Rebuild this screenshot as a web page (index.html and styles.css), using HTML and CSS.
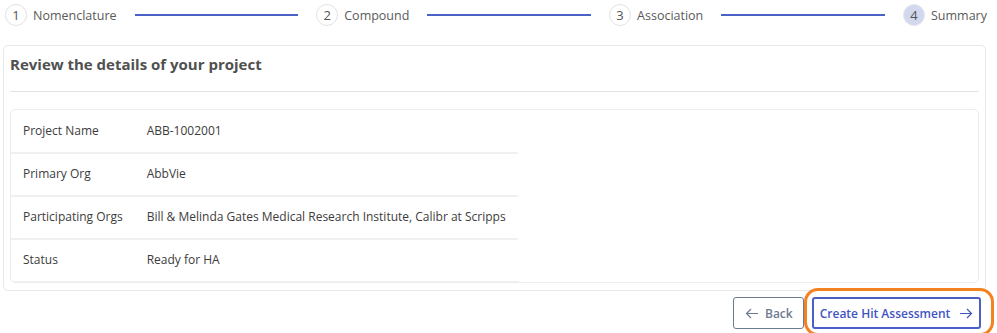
FILE: index.html
```html
<!DOCTYPE html>
<html>
<head>
<meta charset="utf-8">
<link rel="stylesheet" href="styles.css">
</head>
<body>
<div class="page">
  <div class="stepper">
    <div class="step"><span class="num">1</span><span class="label">Nomenclature</span></div>
    <div class="line"></div>
    <div class="step"><span class="num">2</span><span class="label">Compound</span></div>
    <div class="line"></div>
    <div class="step"><span class="num">3</span><span class="label">Association</span></div>
    <div class="line"></div>
    <div class="step active"><span class="num">4</span><span class="label">Summary</span></div>
  </div>

  <div class="card">
    <div class="card-header"><h2 class="title">Review the details of your project</h2></div>
    <div class="inner">
      <table class="details">
        <tr><td class="key">Project Name</td><td class="val">ABB-1002001</td></tr>
        <tr><td class="key">Primary Org</td><td class="val">AbbVie</td></tr>
        <tr><td class="key">Participating Orgs</td><td class="val">Bill &amp; Melinda Gates Medical Research Institute, Calibr at Scripps</td></tr>
        <tr><td class="key">Status</td><td class="val">Ready for HA</td></tr>
      </table>
    </div>
  </div>

  <div class="actions">
    <button class="btn btn-back"><svg class="arrow" width="14" height="11" viewBox="0 0 14 11"><path d="M13 5.5H1.5M6 1L1.5 5.5L6 10" fill="none" stroke="currentColor" stroke-width="1.2"/></svg>Back</button>
    <div class="highlight-wrap">
      <button class="btn btn-primary">Create Hit Assessment<svg class="arrow" width="14" height="11" viewBox="0 0 14 11"><path d="M1 5.5H12.5M8 1L12.5 5.5L8 10" fill="none" stroke="currentColor" stroke-width="1.2"/></svg></button>
      <span class="highlight"></span>
    </div>
  </div>
</div>
</body>
</html>
```
FILE: styles.css
```css
* { box-sizing: border-box; }
html, body { margin: 0; padding: 0; background: #fff; }
body {
  font-family: "Open Sans", "Liberation Sans", sans-serif;
  font-size: 12px;
  color: #3a3a3a;
}
.page { padding: 4px 11px 0 3px; width: 997px; height: 333px; overflow: hidden; }

.stepper {
  display: flex;
  align-items: center;
  height: 22px;
  padding-left: 2px;
  margin-right: -1px;
}
.step { display: flex; align-items: center; gap: 6px; }
.num {
  width: 22px; height: 22px;
  border-radius: 50%;
  border: 1.5px solid #e2e2e2;
  display: flex; align-items: center; justify-content: center;
  font-size: 13px;
  color: #555;
}
.step.active .num { background: #d2d9ef; border-color: #e4e6ee; }
.label { color: #5a5a5a; font-size: 12.5px; }
.line { flex: 1; height: 2px; background: #4a62c6; margin: 0 18px 0 18px; }

.card {
  margin-top: 19px;
  border: 1px solid #e8e8e8;
  border-radius: 5px;
  padding: 0 6px 7px;
  width: 983px;
}
.card-header {
  height: 46px;
  padding-top: 8px;
  border-bottom: 1px solid #e3e3e3;
}
.title {
  margin: 0;
  font-size: 15px;
  line-height: 20px;
  font-weight: 700;
  color: #505050;
}
.inner {
  margin-top: 17px;
  border: 1px solid #ececec;
  border-radius: 5px;
  height: 174px;
  overflow: hidden;
}
.details { border-collapse: collapse; }
.details td {
  height: 43px;
  padding: 0 12px 2px;
  border-bottom: 2px solid #f0f0f0;
  white-space: nowrap;
  color: #3c3c3c;
  vertical-align: middle;
}

.actions {
  display: flex;
  justify-content: flex-end;
  gap: 8px;
  margin-top: 6px;
  padding-right: 5px;
}
.btn {
  height: 32px;
  font-family: "Open Sans", "Liberation Sans", sans-serif;
  font-size: 12px;
  font-weight: 600;
  background: #fff;
  border-radius: 3px;
  display: flex;
  align-items: center;
  gap: 6px;
  white-space: nowrap;
  cursor: pointer;
}
.btn-back {
  width: 71px;
  border: 1.5px solid #6d7b90;
  color: #6d7b90;
  padding: 0 0 0 11px;
}
.btn-primary {
  width: 169px;
  border: 2px solid #4a5fc8;
  color: #3f55c2;
  padding: 0;
  justify-content: center;
  gap: 9px;
}
.highlight-wrap { position: relative; }
.highlight {
  position: absolute;
  left: -8px; right: -13px; top: -9px; bottom: -7px;
  border: 3.5px solid #f58220;
  border-radius: 14px;
  pointer-events: none;
}
```
